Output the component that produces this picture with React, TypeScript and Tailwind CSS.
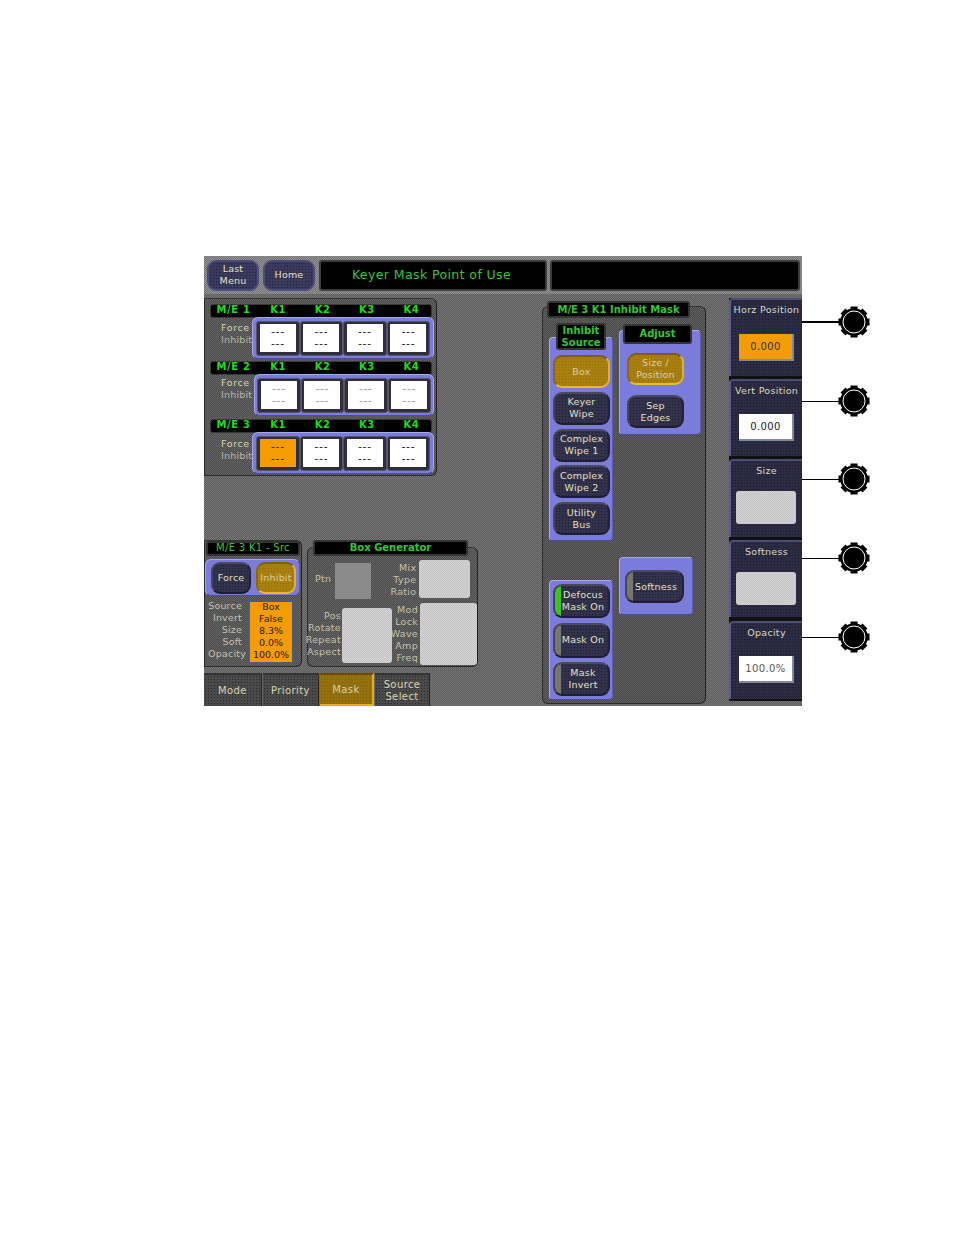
import React from "react";

const D = "bg-[image:repeating-conic-gradient(rgba(0,0,0,0.16)_0_25%,rgba(255,255,255,0.07)_0_50%)] bg-[size:2px_2px]";
const L = "bg-[image:repeating-conic-gradient(rgba(0,0,0,0.05)_0_25%,rgba(255,255,255,0.12)_0_50%)] bg-[size:2px_2px]";
const N = "bg-[image:radial-gradient(rgba(0,0,0,0.4)_0.6px,transparent_0.9px)] bg-[size:3px_3px]";
const G = "bg-[image:radial-gradient(rgba(60,40,0,0.22)_0.6px,transparent_0.9px)] bg-[size:3px_3px]";
const P = "bg-[image:radial-gradient(rgba(80,80,190,0.3)_0.6px,transparent_0.9px)] bg-[size:2px_2px]";
const panelEdge = "border border-[#2a2a2a] border-t-[#333] border-r-[#222]";

function Btn({ w, h, t, gold, lamp, cls = "" }: { w: number | string; h: number | string; t: string[]; gold?: boolean; lamp?: "green" | "gray"; cls?: string }) {
  const tone = gold
    ? `bg-[#a9800f] border-t-[#7d5e0c] border-l-[#8a680e] border-r-[#e0b424] border-b-[#e8bc2a] text-[#d8cfa6] ${G}`
    : `bg-[#32324c] border-t-[#4a4a5e] border-l-[#45455a] border-r-[#22223a] border-b-[#1e1e30] text-[#e4e0c4] ${N}`;
  return (
    <div
      style={{ width: w, height: h }}
      className={`relative flex shrink-0 flex-col items-center justify-center overflow-hidden rounded-[9px] border-2 ${tone} ${cls}`}
    >
      {lamp && (
        <div className={`absolute left-0 top-0 h-full w-[6px] rounded-l-[7px] ${lamp === "green" ? "bg-[#3fc21f]" : "bg-[#77776f]"}`} />
      )}
      <div className={`flex flex-col items-center text-[9.5px] leading-[12px] tracking-[0.2px] ${lamp ? "pl-[3px]" : ""}`}>
        {t.map((x) => (
          <span key={x} className="whitespace-nowrap">{x}</span>
        ))}
      </div>
    </div>
  );
}

function Cell({ orange, gray }: { orange?: boolean; gray?: boolean }) {
  return (
    <div className="flex h-[35px] w-[43.5px] shrink-0 items-center justify-center rounded-[3px] border border-[#55556a] bg-[#2f2f3c]">
      <div className={`flex h-[28px] w-[36px] flex-col items-center justify-center text-[11px] leading-[12px] tracking-[0.6px] ${orange ? "bg-[#f59c05] text-[#3a2600]" : "bg-white"} ${gray ? "text-[#9a9a9a]" : orange ? "" : "text-[#222]"}`}>
        <span>---</span>
        <span>---</span>
      </div>
    </div>
  );
}

function KRow({ n, gap, groupW, labelTop, orange, gray }: { n: number; gap: number; groupW: number; labelTop: number; orange?: boolean; gray?: boolean }) {
  return (
    <div style={{ marginTop: gap }}>
      <div className="ml-[5px] grid h-[14px] w-[222px] grid-cols-[45px_repeat(4,44.4px)] items-center rounded-[3px] border border-[#3a3a3a] bg-black pb-[2px] text-[10px] font-bold leading-[10px] tracking-[0.6px] text-[#18e018]">
        <span className="text-center">M/E {n}</span>
        <span className="text-center">K1</span>
        <span className="text-center">K2</span>
        <span className="text-center">K3</span>
        <span className="text-center">K4</span>
      </div>
      <div className="flex justify-end">
        <div style={{ paddingTop: labelTop }} className="flex flex-1 flex-col pl-[16px] text-[9.5px] leading-[12px] tracking-[0.2px] text-[#d8d4b4]">
          <span className="tracking-[0.6px]">Force</span>
          <span className="text-[#b8b8a4]">Inhibit</span>
        </div>
        <div style={{ width: groupW }} className={`-mt-[1px] mr-[2px] flex h-[42px] items-center justify-center rounded-[6px] border border-[#a8a8f0] border-b-[#4a4aa0] bg-[#8686e4] ${P}`}>
          <Cell orange={orange} gray={gray} />
          <Cell gray={gray} />
          <Cell gray={gray} />
          <Cell gray={gray} />
        </div>
      </div>
    </div>
  );
}

function Group({ children, cls }: { children: React.ReactNode; cls: string }) {
  return <div className={`rounded-[4px] border border-[#a8a8f0] border-b-[#4a4aa0] border-r-[#5a5ab0] bg-[#8686e4] ${P} ${cls}`}>{children}</div>;
}

function Title({ t, cls }: { t: string[]; cls: string }) {
  return (
    <div className={`relative z-10 flex flex-col items-center justify-center rounded-[3px] border-2 border-[#333] bg-black text-[10px] font-bold leading-[12px] text-[#2fc92f] ${cls}`}>
      {t.map((x) => <span key={x} className="whitespace-nowrap">{x}</span>)}
    </div>
  );
}

function Gray({ cls }: { cls: string }) {
  return <div className={`rounded-[3px] bg-[#cfcdcf] ${L} ${cls}`} />;
}

function Lines({ t, cls }: { t: string[]; cls: string }) {
  return (
    <div className={`flex flex-col text-[9.5px] leading-[12px] tracking-[0.3px] text-[#c4c2a8] ${cls}`}>
      {t.map((x) => <span key={x} className="whitespace-nowrap">{x}</span>)}
    </div>
  );
}

function Tab({ w, t, gold }: { w: number; t: string[]; gold?: boolean }) {
  return (
    <div
      style={{ width: w }}
      className={`flex h-[33px] flex-col items-center justify-center border-t-2 text-[10px] leading-[12px] tracking-[0.4px] ${gold ? `border-b-2 border-r-2 border-b-[#e0b020] border-r-[#e0b020] border-t-[#6a4a08] bg-[#94700f] text-[#d8cfa6] ${G}` : `border-r border-r-[#222] border-t-[#333] bg-[#4a4a4a] text-[#d8d4b4] ${N}`}`}
    >
      {t.map((x) => <span key={x}>{x}</span>)}
    </div>
  );
}

function Side({ label, h, mt, field, gray }: { label: string; h: number; mt: number; field?: { v: string; orange?: boolean; top: number; dim?: boolean }; gray?: boolean }) {
  return (
    <div style={{ height: h, marginTop: mt }} className={`flex flex-col items-center rounded-tl-[4px] border-l-2 border-t-2 border-l-[#5a5a90] border-t-[#4c4c78] bg-[#2b2b43] ${N}`}>
      <span className="mt-[4px] whitespace-nowrap text-[9.5px] leading-[12px] tracking-[0.3px] text-[#dcdac4]">{label}</span>
      {field && (
        <div
          style={{ marginTop: field.top }}
          className={`flex h-[27px] w-[55px] items-center justify-center border-b-2 border-r-2 border-[#7d8aa0] text-[10px] tracking-[0.4px] ${field.orange ? "bg-[#f59c05] text-[#333]" : "bg-white"} ${field.dim ? "text-[#555]" : "text-[#222]"}`}
        >
          {field.v}
        </div>
      )}
      {gray && <Gray cls="-ml-[2px] mt-[14px] h-[33px] w-[60px]" />}
    </div>
  );
}

function Knob({ mt, thick }: { mt: number; thick?: boolean }) {
  const bumps = Array.from({ length: 8 }, (_, i) => i * 45);
  return (
    <div style={{ marginTop: mt }} className="flex h-[32px] items-center">
      <div className={`w-[37px] bg-black ${thick ? "h-[2px]" : "h-[1px]"}`} />
      <svg width="32" height="32" viewBox="0 0 32 32" className="-ml-[1px]">
        {bumps.map((a) => (
          <rect key={a} x="12.5" y="0.5" width="7" height="4" fill="#000" transform={`rotate(${a} 16 16)`} />
        ))}
        <circle cx="16" cy="16" r="13.8" fill="#000" />
        <circle cx="16" cy="16" r="11" fill="#000" stroke="#fff" strokeWidth="1" />
      </svg>
    </div>
  );
}

export default function App() {
  return (
    <div className="flex h-[1235px] w-[954px] bg-white pl-[204px] pt-[256px] font-['DejaVu_Sans','Liberation_Sans',sans-serif]">
      <div className={`flex h-[450px] w-[598px] shrink-0 flex-col bg-[#6e6c6d] ${D}`}>
        {/* header */}
        <div className={`flex h-[38px] shrink-0 items-center gap-[3px] bg-[#8a8a8a] pl-[3px] ${D}`}>
          <Btn w={52} h={31} t={["Last", "Menu"]} cls="!border-[#4c4c7a] !bg-[#3a3a5e]" />
          <Btn w={52} h={31} t={["Home"]} cls="ml-[1px] !border-[#4c4c7a] !bg-[#3a3a5e]" />
          <div className="ml-[1px] flex h-[31px] w-[228px] items-center justify-center rounded-[3px] border-2 border-[#3c3c3c] bg-black pt-[1px] pr-[3px] text-[12.5px] tracking-[0.4px] text-[#38c438]">
            Keyer Mask Point of Use
          </div>
          <div className="h-[31px] w-[250px] rounded-[3px] border-2 border-[#3c3c3c] bg-black" />
        </div>

        {/* body */}
        <div className="flex flex-1">
          {/* left column */}
          <div className="flex w-[338px] shrink-0 flex-col">
            <div className={`mt-[4px] h-[178px] w-[233px] rounded-r-[6px] ${panelEdge} bg-[#595959] ${D}`}>
              <KRow n={1} gap={5} groupW={182} labelTop={4} />
              <KRow n={2} gap={2} groupW={180} labelTop={2} gray />
              <KRow n={3} gap={3} groupW={183} labelTop={5} orange />
            </div>

            <div className="mt-[64px] flex">
              {/* source panel */}
              <div className={`h-[127px] w-[98px] shrink-0 rounded-[6px] rounded-l-none ${panelEdge} bg-[#595959] ${D}`}>
                <Title t={["M/E 3 K1 - Src"]} cls="ml-[1px] h-[15px] w-[94px] pb-[1px] !font-normal tracking-[0.3px]" />
                <Group cls="mt-[3px] flex h-[37px] w-[95px] items-center gap-[5px] !rounded-[6px] pl-[5px]">
                  <Btn w={40} h={32} t={["Force"]} />
                  <Btn w={40} h={32} t={["Inhibit"]} gold />
                </Group>
                <div className="mt-[4px] flex">
                  <div className="flex w-[37px] flex-col items-end text-[9.5px] leading-[12px] tracking-[0.2px] text-[#c4c2a8]">
                    <span>Source</span>
                    <span>Invert</span>
                    <span>Size</span>
                    <span>Soft</span>
                    <span className="-mr-[4px] whitespace-nowrap">Opacity</span>
                  </div>
                  <div className="ml-[6px] flex h-[64px] w-[46px] flex-col items-center border-2 border-[#4a5a80] bg-[#f59c05] text-[9.5px] leading-[12px] text-[#2a2000]">
                    <span className="-mt-[1px]">Box</span>
                    <span>False</span>
                    <span>8.3%</span>
                    <span>0.0%</span>
                    <span className="whitespace-nowrap">100.0%</span>
                  </div>
                </div>
              </div>

              {/* box generator */}
              <div className="ml-[5px] flex w-[171px] flex-col">
                <div className={`mt-[7px] h-[120px] rounded-[6px] ${panelEdge} bg-[#595959] ${D}`}>
                  <Title t={["Box Generator"]} cls="-mt-[8px] ml-[5px] h-[16px] w-[155px]" />
                  <div className="mt-[6px] flex h-[43px]">
                    <span className="ml-[7px] mt-[11px] text-[9.5px] leading-[12px] tracking-[0.3px] text-[#c4c2a8]">Ptn</span>
                    <div className="ml-[4px] mt-[1px] h-[36px] w-[36px] bg-[#8b8b8b]" />
                    <Lines t={["Mix", "Type", "Ratio"]} cls="ml-[4px] w-[41px] items-end" />
                    <Gray cls="ml-[3px] -mt-[2px] h-[38px] w-[51px]" />
                  </div>
                  <div className="-mt-[1px] flex">
                    <Lines t={["Pos", "Rotate", "Repeat", "Aspect"]} cls="mt-[6px] w-[33px] shrink-0 items-end" />
                    <Gray cls="ml-[1px] mt-[4px] h-[55px] w-[50px]" />
                    <Lines t={["Mod", "Lock", "Wave", "Amp", "Freq"]} cls="w-[26px] items-end" />
                    <Gray cls="ml-[2px] -mt-[1px] h-[62px] w-[57px]" />
                  </div>
                </div>
              </div>
            </div>

            {/* tabs */}
            <div className="mt-[6px] flex gap-[1px]">
              <Tab w={58} t={["Mode"]} />
              <Tab w={56} t={["Priority"]} />
              <Tab w={54} t={["Mask"]} gold />
              <Tab w={55} t={["Source", "Select"]} />
            </div>
          </div>

          {/* center panel */}
          <div className={`mt-[12px] h-[398px] w-[164px] shrink-0 rounded-[6px] ${panelEdge} bg-[#555] ${D}`}>
            <Title t={["M/E 3 K1 Inhibit Mask"]} cls="-mt-[6px] ml-[4px] h-[17px] w-[143px]" />
            <div className="flex">
              {/* left buttons */}
              <div className="ml-[6px] flex w-[64px] flex-col">
                <Title t={["Inhibit", "Source"]} cls="mt-[5px] ml-[7px] h-[27px] w-[50px]" />
                <Group cls="-mt-[13px] flex h-[204px] flex-col gap-[3.75px] pl-[3px] pt-[17px]">
                  <Btn w={57} h={33} t={["Box"]} gold />
                  <Btn w={57} h={33} t={["Keyer", "Wipe"]} />
                  <Btn w={57} h={33} t={["Complex", "Wipe 1"]} />
                  <Btn w={57} h={33} t={["Complex", "Wipe 2"]} />
                  <Btn w={57} h={33} t={["Utility", "Bus"]} />
                </Group>
                <Group cls="mt-[39px] flex h-[120px] flex-col gap-[4.5px] pl-[3px] pt-[3px]">
                  <Btn w={57} h={34} t={["Defocus", "Mask On"]} lamp="green" />
                  <Btn w={57} h={35} t={["Mask On"]} lamp="gray" />
                  <Btn w={57} h={34} t={["Mask", "Invert"]} lamp="gray" />
                </Group>
              </div>
              {/* right buttons */}
              <div className="ml-[6px] flex flex-col">
                <Title t={["Adjust"]} cls="mt-[6px] ml-[4px] h-[20px] w-[69px]" />
                <Group cls="-mt-[14px] flex h-[105px] w-[82px] flex-col pl-[7px] pt-[22px]">
                  <Btn w={57} h={32} t={["Size /", "Position"]} gold />
                  <Btn w={57} h={33} t={["Sep", "Edges"]} cls="mt-[10px]" />
                </Group>
                <Group cls="mt-[122px] h-[58px] w-[74px] pl-[5px] pt-[12px]">
                  <Btn w={59} h={33} t={["Softness"]} lamp="gray" />
                </Group>
              </div>
            </div>
          </div>

          {/* right column */}
          <div className="ml-[23px] mt-[4px] flex h-[403px] w-[73px] shrink-0 flex-col bg-[#111]">
            <Side label="Horz Position" h={78} mt={0} field={{ v: "0.000", orange: true, top: 18 }} />
            <Side label="Vert Position" h={77} mt={3} field={{ v: "0.000", top: 17 }} />
            <Side label="Size" h={78} mt={3} gray />
            <Side label="Softness" h={77} mt={3} gray />
            <Side label="Opacity" h={78} mt={4} field={{ v: "100.0%", top: 17, dim: true }} />
          </div>
        </div>
      </div>

      {/* callouts */}
      <div className="flex flex-col pt-[50px]">
        <Knob mt={0} thick />
        <Knob mt={47} />
        <Knob mt={46} />
        <Knob mt={47} />
        <Knob mt={47} />
      </div>
    </div>
  );
}
